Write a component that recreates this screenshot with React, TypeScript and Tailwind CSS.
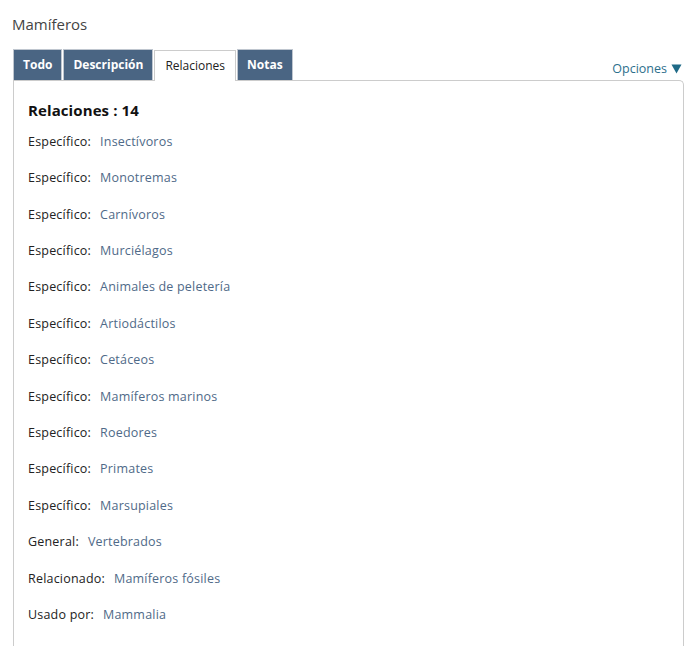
import React from 'react';

const relations: { label: string; value: string }[] = [
  { label: 'Específico:', value: 'Insectívoros' },
  { label: 'Específico:', value: 'Monotremas' },
  { label: 'Específico:', value: 'Carnívoros' },
  { label: 'Específico:', value: 'Murciélagos' },
  { label: 'Específico:', value: 'Animales de peletería' },
  { label: 'Específico:', value: 'Artiodáctilos' },
  { label: 'Específico:', value: 'Cetáceos' },
  { label: 'Específico:', value: 'Mamíferos marinos' },
  { label: 'Específico:', value: 'Roedores' },
  { label: 'Específico:', value: 'Primates' },
  { label: 'Específico:', value: 'Marsupiales' },
  { label: 'General:', value: 'Vertebrados' },
  { label: 'Relacionado:', value: 'Mamíferos fósiles' },
  { label: 'Usado por:', value: 'Mammalia' },
];

const tabs = ['Todo', 'Descripción', 'Relaciones', 'Notas'];

export default function App() {
  const active = 'Relaciones';

  return (
    <div
      className="bg-white h-[646px] overflow-hidden pl-[13px] pr-[12px] text-[#222]"
      style={{ fontFamily: '"Open Sans", "DejaVu Sans", sans-serif' }}
    >
      {/* Título */}
      <h1 className="pt-[13px] -ml-px text-[15px] leading-[22px] text-[#444]">Mamíferos</h1>

      {/* Pestañas */}
      <div className="mt-[14px] flex items-end justify-between">
        <div className="flex items-end gap-px">
          {tabs.map((tab) => {
            const isActive = tab === active;
            return isActive ? (
              <div
                key={tab}
                className="relative -mb-px h-[31px] px-[10px] flex items-center bg-white border border-b-0 border-[#ccc] text-[12px] text-[#222] z-10"
              >
                {tab}
              </div>
            ) : (
              <div
                key={tab}
                className="h-[31px] px-[9px] flex items-center bg-[#4a6583] border border-b-0 border-[#bfc6cf] text-[12px] font-bold text-white"
              >
                {tab}
              </div>
            );
          })}
        </div>
        <button className="mb-[3px] mr-[2px] flex items-center gap-[4px] text-[12.5px] leading-[16px] text-[#2d6f8c]">
          Opciones
          <svg width="11" height="10" viewBox="0 0 11 10">
            <path d="M0.5 0.5 L10.5 0.5 L5.5 9.5 Z" fill="#1f6a87" />
          </svg>
        </button>
      </div>

      {/* Panel */}
      <div className="border border-b-0 border-[#ccc] rounded-tr-[5px] h-[600px] pl-[14px] pt-[19px]">
        <h2 className="text-[15px] font-bold leading-[20px] tracking-[0.1px] text-[#111]">Relaciones : 14</h2>
        <div className="mt-[4px] flex flex-col">
          {relations.map((r, i) => (
            <div key={i} className="h-[36.4px] flex items-center text-[12.5px] tracking-[0.2px]">
              <span className="text-[#222]">{r.label}</span>
              <span className="ml-[9px] text-[#4f6a88]">{r.value}</span>
            </div>
          ))}
        </div>
      </div>
    </div>
  );
}
